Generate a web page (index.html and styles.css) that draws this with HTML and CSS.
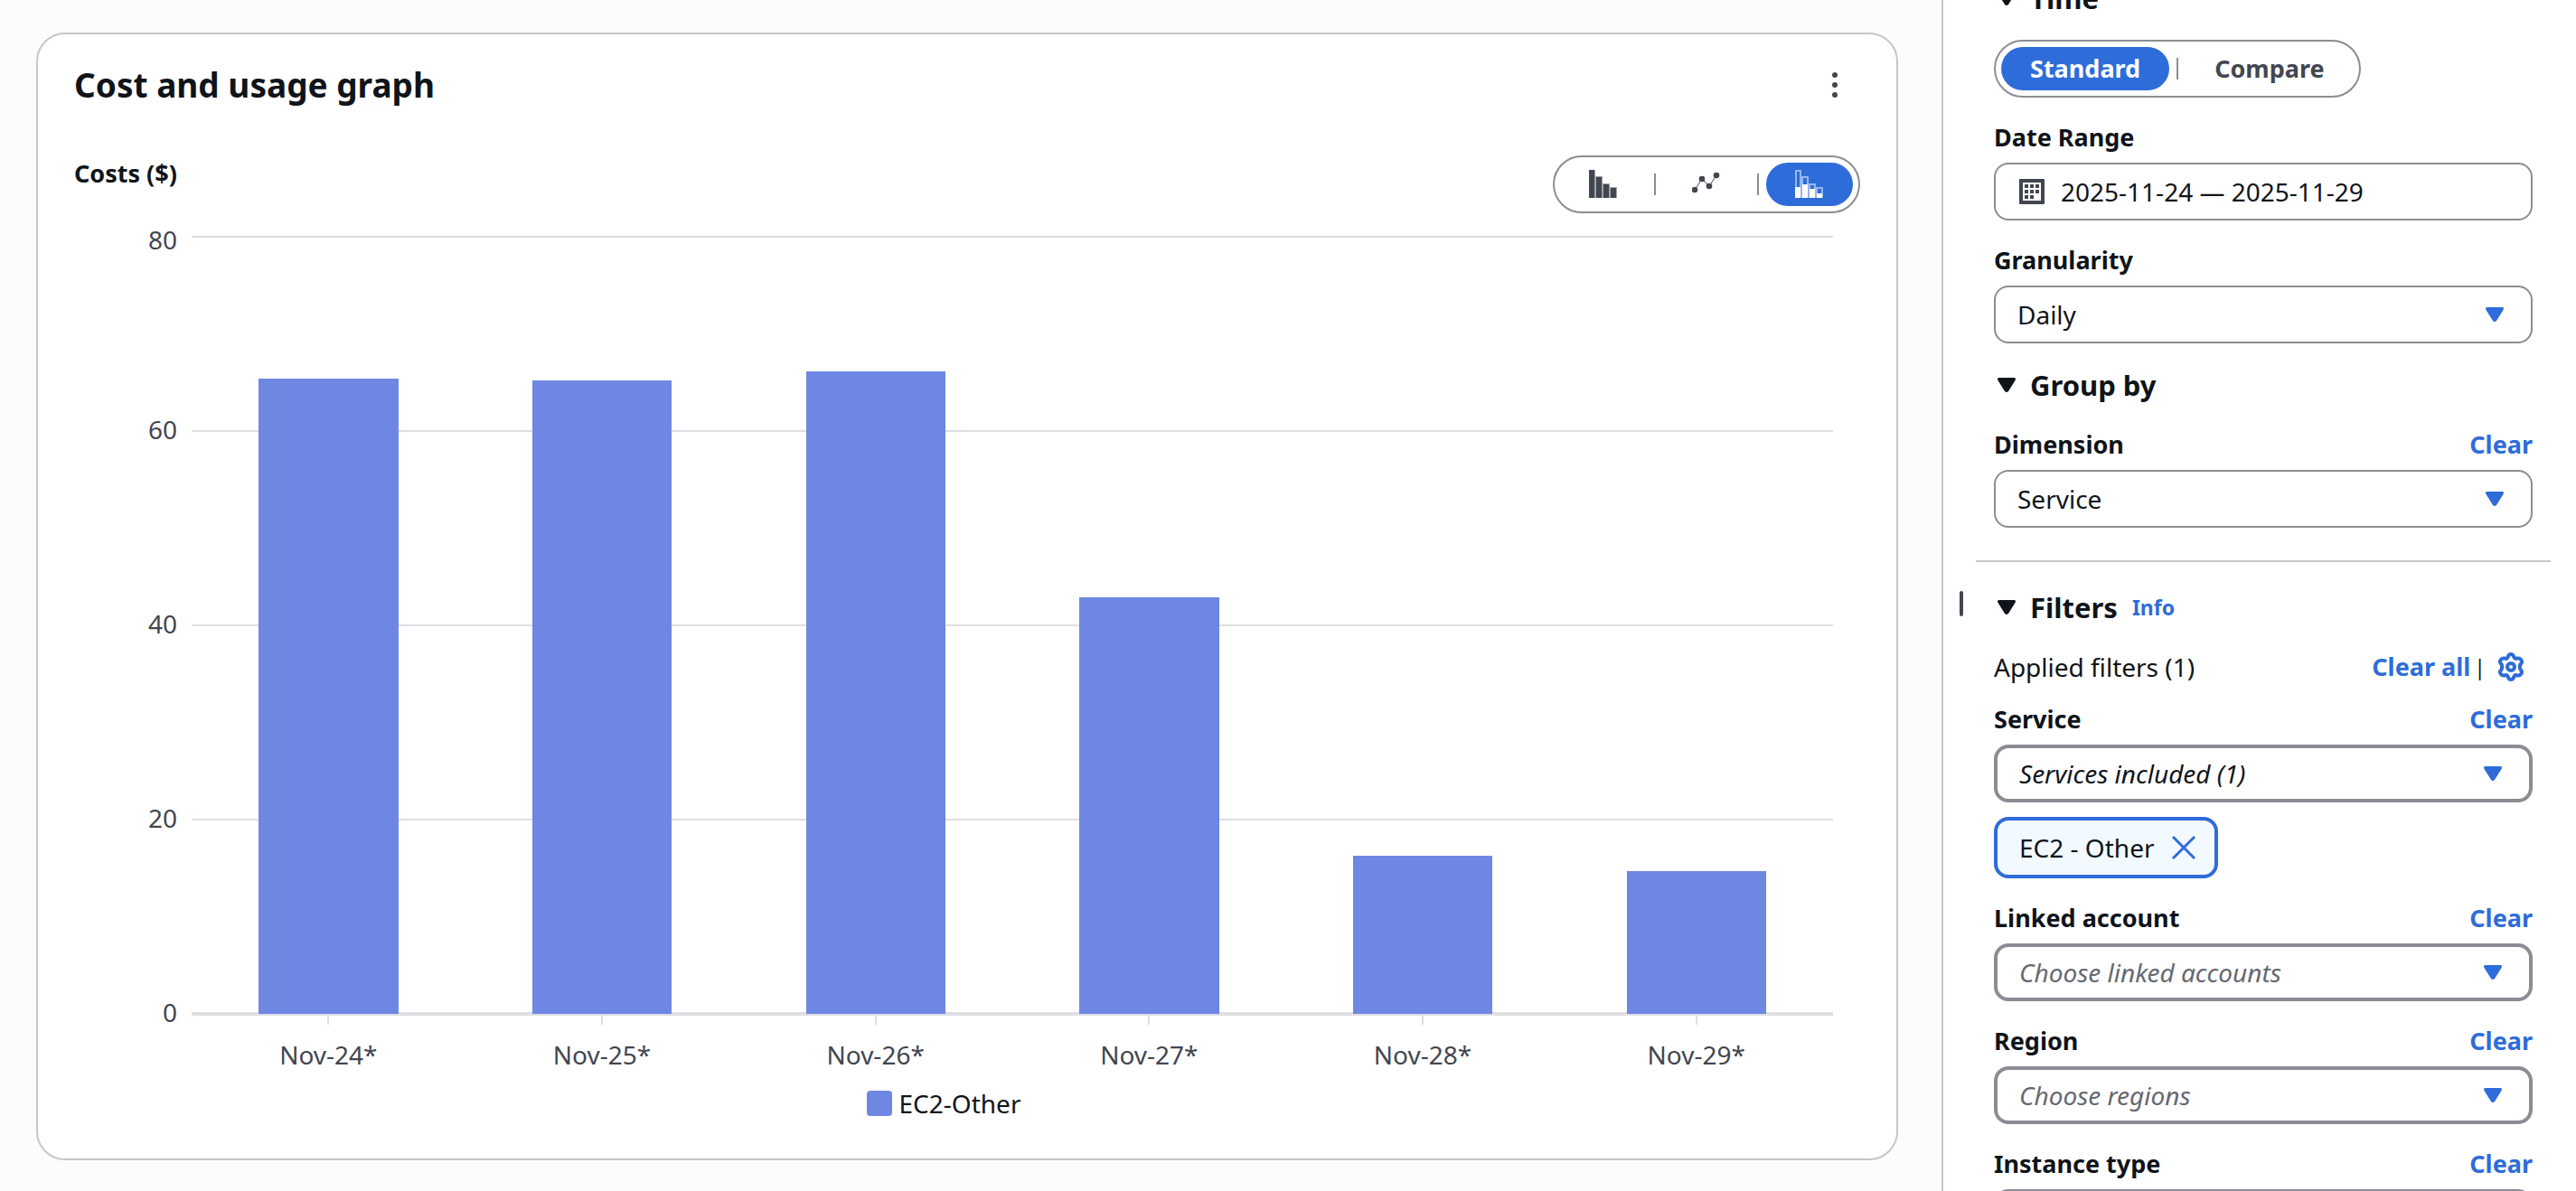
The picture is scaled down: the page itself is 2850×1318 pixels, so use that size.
FILE: index.html
```html
<!DOCTYPE html>
<html lang="en">
<head>
    <meta charset="UTF-8">
    <meta name="viewport" content="width=device-width, initial-scale=1.0">
    <title>Cost Explorer</title>
    <link rel="stylesheet" href="styles.css">
</head>
<body>

<svg class="sprite" aria-hidden="true">
    <symbol id="caret" viewBox="0 0 20 16"><path d="M2 0h16q3 0 1.5 3L12 15q-2 2-4 0L.5 3Q-1 0 2 0z"/></symbol>
</svg>

<main class="main">
    <section class="card">
        <header class="card-header">
            <h2 class="card-title">Cost and usage graph</h2>
            <button class="icon-btn" aria-label="More actions">
                <svg width="6" height="28" viewBox="0 0 6 28"><circle cx="3" cy="3" r="3"/><circle cx="3" cy="14" r="3"/><circle cx="3" cy="25" r="3"/></svg>
            </button>
        </header>

        <div class="chart-top">
            <h3 class="axis-title">Costs ($)</h3>
            <div class="segmented" role="group" aria-label="Chart type">
                <button class="segment icon" aria-label="Bar">
                    <svg width="32" height="32" viewBox="0 0 32 32"><path opacity=".5" d="M0 0h7v7h8v8h8v4h8v12H0z"/><path d="M0 0h6v31H0zM8 8h6v23H8zM16 16h6v15h-6zM24 20h6v11h-6z"/></svg>
                </button>
                <span class="separator"></span>
                <button class="segment icon" aria-label="Line">
                    <svg width="32" height="32" viewBox="0 0 32 32"><path d="M3 22l8-12 8 8 8-12" fill="none" stroke="#424650"/><circle cx="3" cy="22" r="3.300"/><circle cx="11" cy="10" r="3.300"/><circle cx="19" cy="18" r="3.300"/><circle cx="27" cy="6" r="3.300"/></svg>
                </button>
                <span class="separator"></span>
                <button class="segment icon active" aria-label="Stack">
                    <svg width="32" height="32" viewBox="0 0 32 32"><path fill="none" stroke="#fff" stroke-width="2" opacity=".5" d="M1 1h5v29H1zM8 8h6v22H8zM16 16h6v14h-6zM24 20h6v10h-6z"/><path d="M0 19h6v12H0zM8 16h6v15H8zM16 21h6v10h-6zM24 26h6v5h-6z"/></svg>
                </button>
            </div>
        </div>

        <div class="chart">
            <div class="y-axis"><span>80</span><span>60</span><span>40</span><span>20</span><span>0</span></div>
            <div class="plot">
                <div class="column"><div class="bar" style="height: 81.6%"></div></div>
                <div class="column"><div class="bar" style="height: 81.4%"></div></div>
                <div class="column"><div class="bar" style="height: 82.6%"></div></div>
                <div class="column"><div class="bar" style="height: 53.6%"></div></div>
                <div class="column"><div class="bar" style="height: 20.3%"></div></div>
                <div class="column"><div class="bar" style="height: 18.3%"></div></div>
            </div>
            <div class="x-axis">
                <span>Nov-24*</span><span>Nov-25*</span><span>Nov-26*</span><span>Nov-27*</span><span>Nov-28*</span><span>Nov-29*</span>
            </div>
        </div>

        <div class="legend"><span class="swatch"></span>EC2-Other</div>
    </section>
</main>

<aside class="sidebar">
    <button class="resize-handle" aria-label="Resize panel"></button>
    <div class="panel">
        <section class="group">
            <h3 class="group-title"><svg class="caret"><use href="#caret"/></svg>Time</h3>
            <div class="segmented" role="group" aria-label="Mode">
                <button class="segment active">Standard</button>
                <span class="separator"></span>
                <button class="segment">Compare</button>
            </div>
            <div class="field">
                <div class="field-head"><label for="dateRange">Date Range</label></div>
                <button class="control date" id="dateRange">
                    <svg width="28" height="28" viewBox="0 0 28 28"><path fill-rule="evenodd" d="M1 0h26q1 0 1 1v26q0 1-1 1H1q-1 0-1-1V1q0-1 1-1zM4 4v20h20V4z"/><path d="M6 6h4v4H6zM12 6h4v4h-4zM18 6h4v4h-4zM6 12h4v4H6zM12 12h4v4h-4zM18 12h4v4h-4zM6 18h4v4H6zM12 18h4v4h-4z"/></svg>
                    2025-11-24 — 2025-11-29
                </button>
            </div>
            <div class="field">
                <div class="field-head"><label for="granularity">Granularity</label></div>
                <div class="select"><select class="control" id="granularity"><option>Daily</option></select><svg class="caret"><use href="#caret"/></svg></div>
            </div>
        </section>

        <section class="group">
            <h3 class="group-title"><svg class="caret"><use href="#caret"/></svg>Group by</h3>
            <div class="field">
                <div class="field-head"><label for="dimension">Dimension</label><a href="#">Clear</a></div>
                <div class="select"><select class="control" id="dimension"><option>Service</option></select><svg class="caret"><use href="#caret"/></svg></div>
            </div>
        </section>

        <hr class="divider">

        <section class="group">
            <h3 class="group-title"><svg class="caret"><use href="#caret"/></svg>Filters <a class="info" href="#">Info</a></h3>
            <div class="applied">
                <span>Applied filters (1)</span>
                <span class="applied-actions"><a href="#">Clear all</a><span class="pipe">|</span>
                    <button class="icon-btn" aria-label="Filter settings">
                        <svg class="gear" width="32" height="32" viewBox="0 0 32 32"><path d="M12.500 5.500Q13.500 2 16 2T19.500 5.500Q20.500 7.500 23 6.500Q26 6 27.500 8.500T26.500 13Q25 16 26.500 19Q29 21 27.500 23.500T23 25.500Q20.500 24.500 19.500 26.500Q18.500 30 16 30T12.500 26.500Q11.500 24.500 9 25.500Q6 26 4.500 23.500T5.500 19Q7 16 5.500 13Q3 11 4.500 8.500T9 6.500Q11.500 7.500 12.500 5.500z"/><circle cx="16" cy="16" r="4"/></svg>
                    </button>
                </span>
            </div>
            <div class="field">
                <div class="field-head"><label for="service">Service</label><a href="#">Clear</a></div>
                <div class="select thick"><select class="control" id="service"><option>Services included (1)</option></select><svg class="caret"><use href="#caret"/></svg></div>
                <div class="token">EC2 - Other
                    <button class="icon-btn" aria-label="Remove EC2 - Other">
                        <svg width="28" height="28" viewBox="0 0 28 28"><path d="M2 2l24 24M26 2L2 26" stroke="#2e6cd9" stroke-width="3"/></svg>
                    </button>
                </div>
            </div>
            <div class="field">
                <div class="field-head"><label for="account">Linked account</label><a href="#">Clear</a></div>
                <div class="select thick empty"><select class="control" id="account"><option>Choose linked accounts</option></select><svg class="caret"><use href="#caret"/></svg></div>
            </div>
            <div class="field">
                <div class="field-head"><label for="region">Region</label><a href="#">Clear</a></div>
                <div class="select thick empty"><select class="control" id="region"><option>Choose regions</option></select><svg class="caret"><use href="#caret"/></svg></div>
            </div>
            <div class="field">
                <div class="field-head"><label for="instance">Instance type</label><a href="#">Clear</a></div>
                <div class="select thick empty"><select class="control" id="instance"><option>Choose instance types</option></select><svg class="caret"><use href="#caret"/></svg></div>
            </div>
        </section>
    </div>
</aside>

</body>
</html>
```
FILE: styles.css
```css
* { box-sizing: border-box; }
body { margin: 0; display: flex; height: 100vh; overflow: hidden; background: #fcfcfd; color: #0f141a; font: 28px/40px "Noto Sans", sans-serif; }
h2, h3 { margin: 0; font-weight: 700; }
button, select { font: inherit; color: inherit; }
button { cursor: pointer; }
a { color: #2e6cd9; font-size: 27px; font-weight: 700; text-decoration: none; }
svg { display: block; fill: currentColor; }
.sprite { display: none; }
.caret { width: 20px; height: 16px; }
.icon-btn { padding: 0; border: none; background: none; color: #424650; }

/* graph card */
.main { flex: 1; min-width: 0; padding: 36px 48px 34px 40px; }
.card { height: 100%; padding: 32px 40px; border: 2px solid #c6c6cd; border-radius: 32px; background: #fff; }
.card-header { display: flex; justify-content: space-between; align-items: center; height: 48px; padding-right: 25px; }
.card-title { font-size: 37px; line-height: 48px; }
.chart-top { display: flex; justify-content: space-between; align-items: flex-start; margin-top: 54px; }
.axis-title { font-size: 27px; line-height: 40px; }
.chart { display: grid; grid-template-columns: 112px 1fr; margin: 25px 30px 0 0; padding-left: 18px; }
.y-axis { display: flex; flex-direction: column; justify-content: space-between; height: 900px; margin: -21px 16px -16px 0; text-align: right; color: #424650; }
.y-axis span:first-child { margin: 5px 0 -5px; }
.plot { display: flex; height: 863px; border-bottom: 4px solid #dedee3; background: repeating-linear-gradient(#dedee3 0 2px, transparent 2px 215px); }
.column { flex: 1; display: flex; justify-content: center; align-items: flex-end; margin-bottom: -2px; }
.bar { width: 51%; background: #6e87e2; }
.x-axis { grid-column: 2; display: flex; color: #424650; }
.x-axis span { flex: 1; text-align: center; }
.x-axis span::before { content: ""; display: block; width: 2px; height: 10px; margin: 0 auto 13px; background: #dedee3; }
.legend { display: flex; justify-content: center; align-items: center; gap: 8px; margin-top: 14px; padding-right: 52px; }
.swatch { width: 28px; height: 28px; border-radius: 4px; background: #6e87e2; }

/* segmented control */
.segmented { display: inline-flex; align-items: center; gap: 8px; padding: 6px; border: 2px solid #8c8c94; border-radius: 32px; background: #fff; color: #424650; }
.segment { height: 48px; padding: 0 32px; border: none; border-radius: 24px; background: none; font-size: 27px; font-weight: 700; }
.segment.active { background: #2e6cd9; color: #fff; }
.separator { width: 2px; height: 24px; background: #8c8c94; }

/* side panel */
.sidebar { display: grid; grid-template-columns: 36px 1fr; width: 702px; padding-right: 28px; border-left: 2px solid #c6c6cd; background: #fff; }
.resize-handle { justify-self: end; width: 4px; height: 28px; margin: calc(50vh - 5px) 14px 0 0; padding: 0; border: none; border-radius: 2px; background: #424650; }
/* panel is scrolled slightly past its first heading */
.panel { margin-top: -22px; }
.group { padding: 0 20px; }
.group + .group { margin-top: 26px; }
.group-title { display: flex; align-items: center; gap: 16px; margin-bottom: 26px; padding-left: 4px; font-size: 31px; line-height: 40px; }
.info { font-size: 23px; }
.field { margin-top: 24px; }
.group-title + .field { margin-top: 0; }
.field-head { display: flex; justify-content: space-between; margin-bottom: 8px; font-size: 27px; font-weight: 700; }
.control { width: 100%; height: 64px; padding: 0 24px; border: 2px solid #8c8c94; border-radius: 16px; background: #fff; text-align: left; appearance: none; }
.date { display: flex; align-items: center; gap: 18px; padding: 0 26px; }
.date svg { color: #424650; }
.select { display: grid; align-items: center; }
.select > * { grid-area: 1 / 1; }
.select .caret { justify-self: end; margin-right: 32px; color: #2e6cd9; pointer-events: none; }
.thick .control { border-width: 4px; font-style: italic; }
.thick .caret { margin-right: 34px; }
.empty .control { color: #656871; }
.divider { height: 2px; margin: 36px 0 30px; border: none; background: #c6c6cd; }
.applied { display: flex; justify-content: space-between; margin-bottom: -6px; }
.applied-actions { display: flex; align-items: center; padding-right: 8px; }
.pipe { margin: 0 12px 0 4px; font-size: 23px; }
.gear { fill: none; stroke: #2e6cd9; stroke-width: 4; stroke-linejoin: round; }
.token { display: inline-flex; align-items: center; gap: 18px; height: 68px; margin-top: 16px; padding: 0 20px 0 24px; border: 4px solid #2e6cd9; border-radius: 16px; background: #f2faff; }
```
